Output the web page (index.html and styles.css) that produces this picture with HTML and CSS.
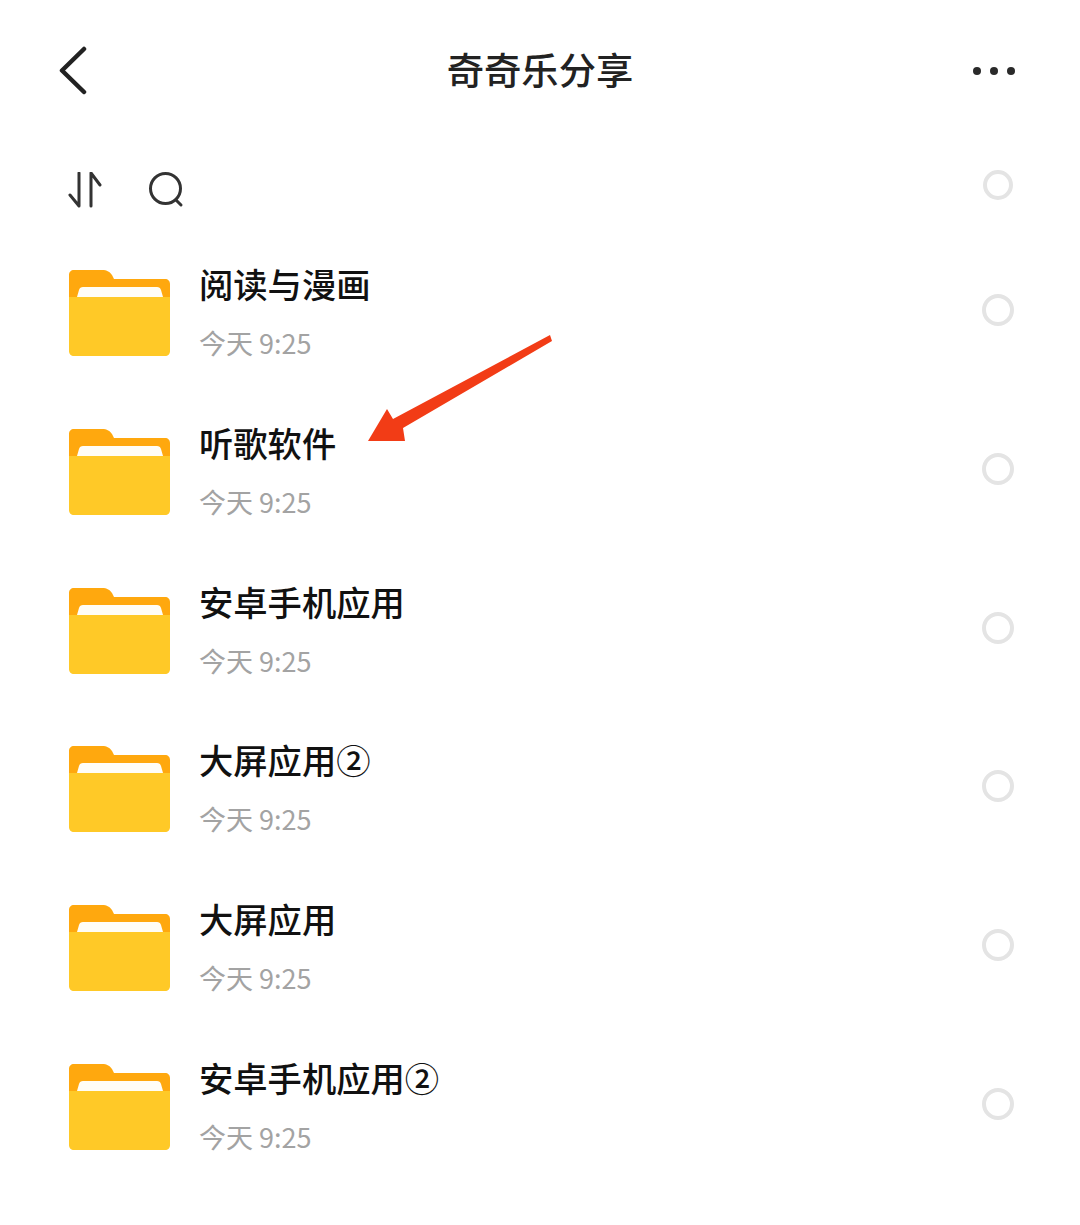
FILE: index.html
```html
<!doctype html>
<html lang="zh-CN">
<head>
<meta charset="UTF-8">
<meta name="viewport" content="width=device-width, initial-scale=1">
<title>奇奇乐分享</title>
<link rel="stylesheet" href="styles.css">
</head>

<body>
<svg class="zeroPixel">
    <symbol id="iconFolder" viewBox="0 0 101 86">
        <path fill="#ffa80e" d="M5 0H33C38 0 41 2 43 5L45 9H96C99 9 101 11 101 14V50H0V5C0 2 2 0 5 0Z"/>
        <path fill="#fffdf6" d="M8 27L10 20C10.500 18 12 17 14 17H88C90 17 91.500 18 92 20L94 27V34H8Z"/>
        <path fill="#ffc927" d="M0 27H101V81C101 84 99 86 96 86H5C2 86 0 84 0 81Z"/>
    </symbol>
</svg>
<header class="header">
    <svg class="iconBack" viewBox="0 0 30 50"><path d="M26 3L4 24.500L26 46"/></svg>
    <h1 class="headerTitle">奇奇乐分享</h1>
    <div class="iconMore"><i></i><i></i><i></i></div>
</header>
<div class="toolbar">
    <svg class="iconSort" viewBox="0 0 34 36"><path d="M11 1V34L2 23M23 34V1L32 13"/></svg>
    <svg class="iconSearch" viewBox="0 0 36 36"><circle cx="17.500" cy="16.500" r="15"/><path d="M28 28L33 33"/></svg>
    <span class="radio radioSmall"></span>
</div>
<ul class="list">
    <li class="row">
        <svg class="iconFolder"><use href="#iconFolder"/></svg>
        <div class="rowText"><div class="rowName">阅读与漫画</div><div class="rowTime">今天 9:25</div></div>
        <span class="radio"></span>
    </li>
    <li class="row">
        <svg class="iconFolder"><use href="#iconFolder"/></svg>
        <div class="rowText"><div class="rowName">听歌软件</div><div class="rowTime">今天 9:25</div></div>
        <span class="radio"></span>
    </li>
    <li class="row">
        <svg class="iconFolder"><use href="#iconFolder"/></svg>
        <div class="rowText"><div class="rowName">安卓手机应用</div><div class="rowTime">今天 9:25</div></div>
        <span class="radio"></span>
    </li>
    <li class="row">
        <svg class="iconFolder"><use href="#iconFolder"/></svg>
        <div class="rowText"><div class="rowName">大屏应用②</div><div class="rowTime">今天 9:25</div></div>
        <span class="radio"></span>
    </li>
    <li class="row">
        <svg class="iconFolder"><use href="#iconFolder"/></svg>
        <div class="rowText"><div class="rowName">大屏应用</div><div class="rowTime">今天 9:25</div></div>
        <span class="radio"></span>
    </li>
    <li class="row">
        <svg class="iconFolder"><use href="#iconFolder"/></svg>
        <div class="rowText"><div class="rowName">安卓手机应用②</div><div class="rowTime">今天 9:25</div></div>
        <span class="radio"></span>
    </li>
</ul>
<svg class="arrow" viewBox="0 0 184 106"><path d="M0 106L19 74L25 84L182 0L184 6L35 93L37 106Z"/></svg>
</body>
</html>
```

FILE: styles.css
```css
*,
*:after,
*:before {
    box-sizing: border-box;
}
body {
    background: #fff;
    color: #111;
    font-family: "Noto Sans CJK SC", "Noto Sans", sans-serif;
    height: 1225px;
    margin: 0;
    overflow: hidden;
    position: relative;
}
ul {
    list-style: none;
    margin: 0;
    padding: 0;
}
.arrow {
    fill: #f23c16;
    height: 106px;
    left: 368px;
    position: absolute;
    top: 335px;
    width: 184px;
}
.header {
    align-items: center;
    display: flex;
    height: 140px;
    justify-content: space-between;
    padding: 2px 65px 0 58px;
    position: relative;
}
.headerTitle {
    color: #222;
    font-size: 37.300px;
    font-weight: 500;
    left: 0;
    line-height: 1;
    margin: 0;
    position: absolute;
    right: 0;
    text-align: center;
    top: 51px;
}
.iconBack {
    fill: none;
    height: 50px;
    stroke: #222;
    stroke-linecap: round;
    stroke-linejoin: round;
    stroke-width: 4.500px;
    width: 30px;
}
.iconFolder {
    flex: none;
    height: 86px;
    margin-right: 29px;
    width: 101px;
}
.iconMore {
    display: flex;
    gap: 9px;
}
.iconMore i {
    background: #2a2a2a;
    border-radius: 50%;
    display: block;
    height: 8px;
    width: 8px;
}
.iconSearch {
    fill: none;
    height: 36px;
    margin-left: 46px;
    stroke: #333;
    stroke-linecap: round;
    stroke-width: 3px;
    width: 36px;
}
.iconSort {
    fill: none;
    height: 36px;
    stroke: #333;
    stroke-linecap: round;
    stroke-linejoin: round;
    stroke-width: 3px;
    width: 34px;
}
.list {
    padding-left: 69px;
    padding-right: 66px;
}
.radio {
    border: 4px solid #e4e4e4;
    border-radius: 50%;
    height: 32px;
    margin-left: auto;
    margin-top: -6px;
    width: 32px;
}
.radioSmall {
    height: 30px;
    margin-top: -10px;
    width: 30px;
}
.row {
    align-items: center;
    display: flex;
    height: 158.700px;
}
.rowName {
    color: #111;
    font-size: 34.300px;
    font-weight: 500;
    line-height: 44px;
}
.rowText {
    margin-top: -4px;
}
.rowTime {
    color: #a3a3a3;
    font-size: 27px;
    line-height: 36px;
    margin-top: 20px;
}
.toolbar {
    align-items: center;
    display: flex;
    height: 94px;
    padding: 5px 67px 0 68px;
}
.zeroPixel {
    border: 0;
    height: 0;
    margin: 0;
    padding: 0;
    position: absolute;
    width: 0;
}
```
